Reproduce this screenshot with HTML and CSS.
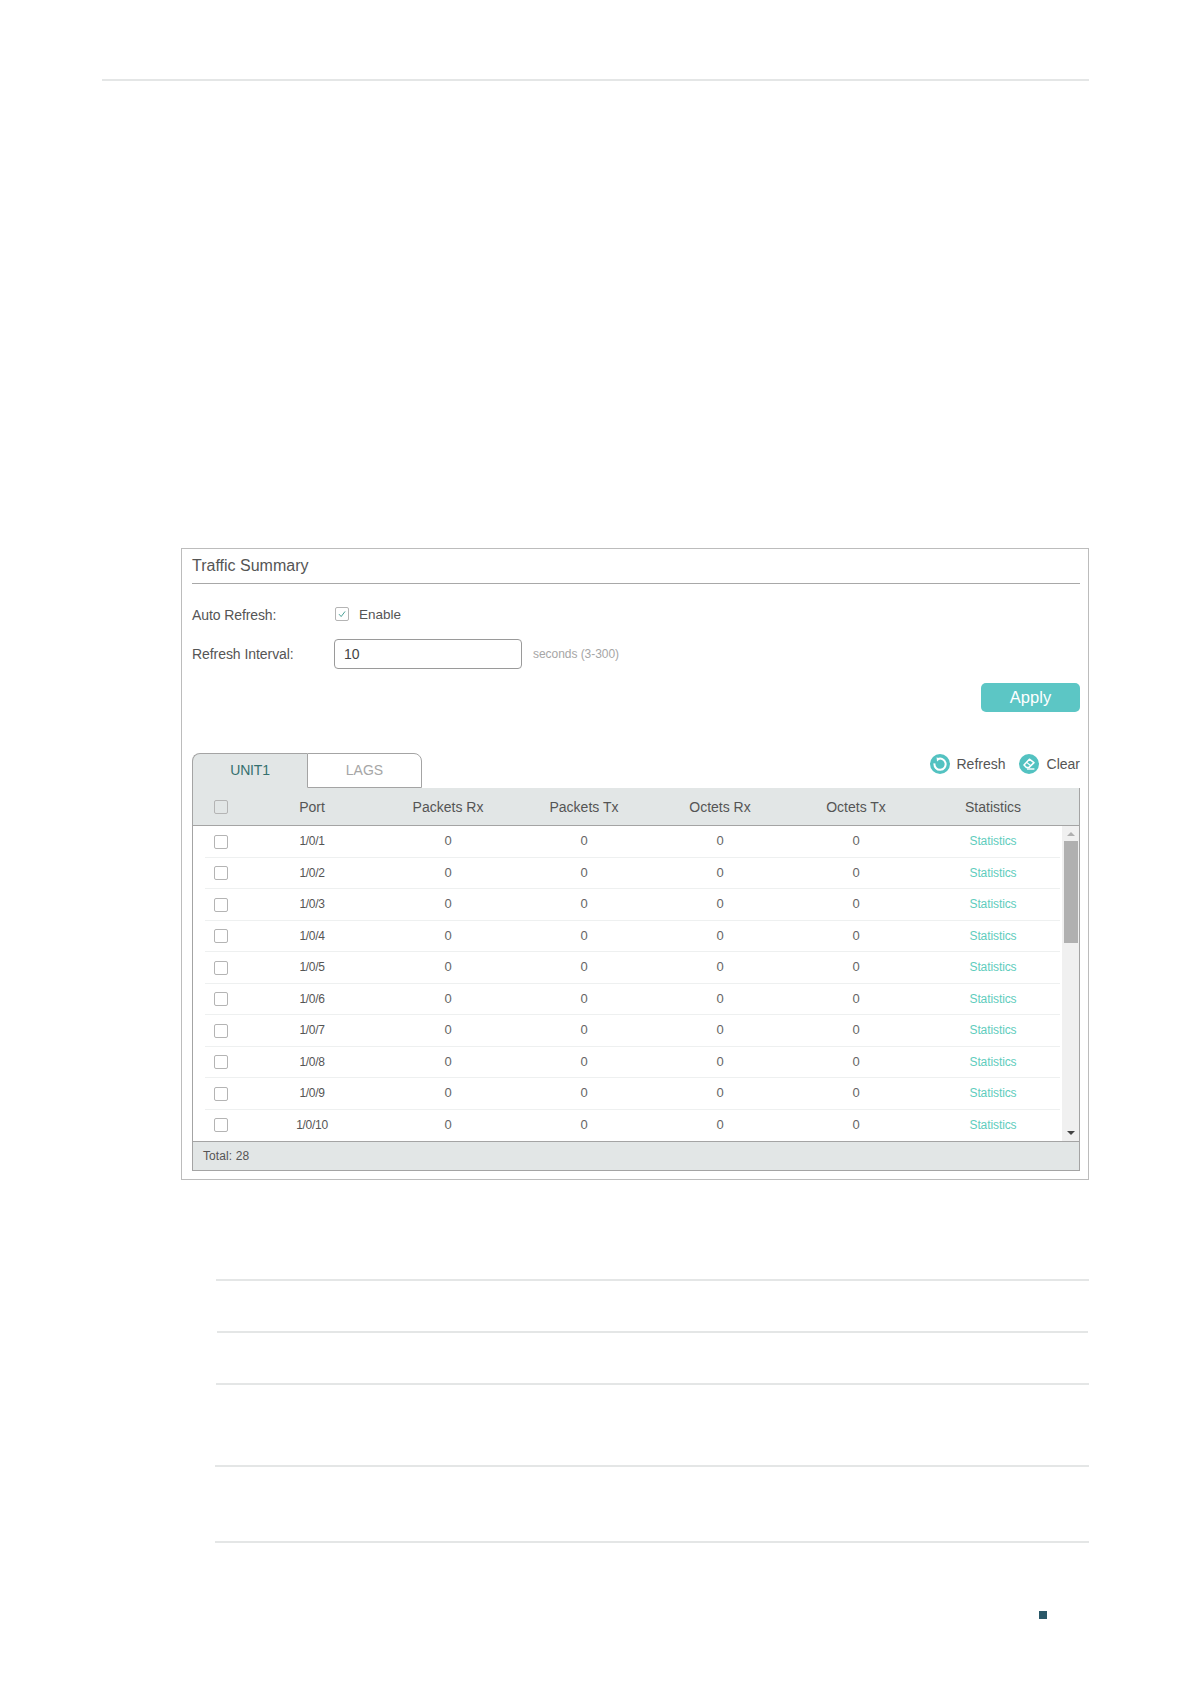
FILE: index.html
```html
<!DOCTYPE html>
<html lang="en">
<head>
<meta charset="utf-8">
<title>Traffic Summary</title>
<link rel="stylesheet" href="styles.css">
</head>
<body>
<div class="page">
  <div class="top-rule"></div>
  <section class="panel">
    <h2 class="title">Traffic Summary</h2>
    <div class="form-row auto-row">
      <span class="label label-auto">Auto Refresh:</span>
      <span class="check-wrap">
        <span class="box box-checked"><svg viewBox="0 0 14 14" class="tick"><path d="M3.5 7.2 6 10l4.6-6"/></svg></span>
        <span class="enable">Enable</span>
      </span>
    </div>
    <div class="form-row interval-row">
      <span class="label label-interval">Refresh Interval:</span>
      <span class="input">10</span>
      <span class="hint">seconds (3-300)</span>
    </div>
    <div class="apply-row"><span class="apply">Apply</span></div>
    <div class="tabbar">
      <div class="tabs">
        <span class="tab tab-on">UNIT1</span>
        <span class="tab tab-off">LAGS</span>
      </div>
      <div class="tools">
        <span class="tool tool-refresh">
          <svg class="tool-icon" viewBox="0 0 20 20"><circle cx="10" cy="10" r="10" fill="#53c2c1"/><path d="M7.6 5.2A5.6 5.6 0 1 1 4.5 9.4" fill="none" stroke="#fff" stroke-width="2"/><path d="M6.6 3.2 10 5 7 7.6Z" fill="#fff"/></svg>
          Refresh
        </span>
        <span class="tool">
          <svg class="tool-icon" viewBox="0 0 20 20"><circle cx="10" cy="10" r="10" fill="#53c2c1"/><path d="M5 11 10.4 5.2 15 8.6 9.8 13.6H7.4Z" fill="none" stroke="#fff" stroke-width="1.5" stroke-linejoin="round"/><path d="M7.6 8.4 11.8 11.8" stroke="#fff" stroke-width="1.2"/><path d="M8 15h7.4" stroke="#fff" stroke-width="1.4"/></svg>
          Clear
        </span>
      </div>
    </div>
    <div class="table">
      <div class="grid head">
        <span class="cell cell-box"><span class="box box-head"></span></span>
        <span class="cell">Port</span>
        <span class="cell">Packets Rx</span>
        <span class="cell">Packets Tx</span>
        <span class="cell">Octets Rx</span>
        <span class="cell">Octets Tx</span>
        <span class="cell cell-stat">Statistics</span>
      </div>
      <div class="body">
        <div class="rows">
          <div class="grid row"><span class="cell cell-box"><span class="box"></span></span><span class="cell port">1/0/1</span><span class="cell num">0</span><span class="cell num">0</span><span class="cell num">0</span><span class="cell num">0</span><span class="cell cell-stat link">Statistics</span></div>
          <div class="grid row"><span class="cell cell-box"><span class="box"></span></span><span class="cell port">1/0/2</span><span class="cell num">0</span><span class="cell num">0</span><span class="cell num">0</span><span class="cell num">0</span><span class="cell cell-stat link">Statistics</span></div>
          <div class="grid row"><span class="cell cell-box"><span class="box"></span></span><span class="cell port">1/0/3</span><span class="cell num">0</span><span class="cell num">0</span><span class="cell num">0</span><span class="cell num">0</span><span class="cell cell-stat link">Statistics</span></div>
          <div class="grid row"><span class="cell cell-box"><span class="box"></span></span><span class="cell port">1/0/4</span><span class="cell num">0</span><span class="cell num">0</span><span class="cell num">0</span><span class="cell num">0</span><span class="cell cell-stat link">Statistics</span></div>
          <div class="grid row"><span class="cell cell-box"><span class="box"></span></span><span class="cell port">1/0/5</span><span class="cell num">0</span><span class="cell num">0</span><span class="cell num">0</span><span class="cell num">0</span><span class="cell cell-stat link">Statistics</span></div>
          <div class="grid row"><span class="cell cell-box"><span class="box"></span></span><span class="cell port">1/0/6</span><span class="cell num">0</span><span class="cell num">0</span><span class="cell num">0</span><span class="cell num">0</span><span class="cell cell-stat link">Statistics</span></div>
          <div class="grid row"><span class="cell cell-box"><span class="box"></span></span><span class="cell port">1/0/7</span><span class="cell num">0</span><span class="cell num">0</span><span class="cell num">0</span><span class="cell num">0</span><span class="cell cell-stat link">Statistics</span></div>
          <div class="grid row"><span class="cell cell-box"><span class="box"></span></span><span class="cell port">1/0/8</span><span class="cell num">0</span><span class="cell num">0</span><span class="cell num">0</span><span class="cell num">0</span><span class="cell cell-stat link">Statistics</span></div>
          <div class="grid row"><span class="cell cell-box"><span class="box"></span></span><span class="cell port">1/0/9</span><span class="cell num">0</span><span class="cell num">0</span><span class="cell num">0</span><span class="cell num">0</span><span class="cell cell-stat link">Statistics</span></div>
          <div class="grid row"><span class="cell cell-box"><span class="box"></span></span><span class="cell port">1/0/10</span><span class="cell num">0</span><span class="cell num">0</span><span class="cell num">0</span><span class="cell num">0</span><span class="cell cell-stat link">Statistics</span></div>
        </div>
        <div class="scrollbar">
          <span class="arrow arrow-up"></span>
          <span class="thumb"></span>
          <span class="arrow arrow-down"></span>
        </div>
      </div>
      <div class="foot">Total: 28</div>
    </div>
  </section>
  <div class="rules">
    <div class="rule r1"></div>
    <div class="rule r2"></div>
    <div class="rule r3"></div>
    <div class="rule r4"></div>
    <div class="rule r5"></div>
  </div>
  <div class="footer-mark"><span class="square"></span></div>
</div>
</body>
</html>
```

FILE: styles.css
```css
* { box-sizing: border-box; }
html, body { margin: 0; padding: 0; background: #fff; }
body { font-family: "Liberation Sans", Arial, sans-serif; color: #555; }
.page { width: 1191px; height: 1684px; padding: 79px 102px 0 102px; }
.top-rule { height: 2px; background: #e4e6e6; }

.panel { margin: 467px 0 0 79px; height: 632px; border: 1px solid #bcbcbc; padding: 0 8px 6px 10px; }
.title { margin: 0; height: 35px; border-bottom: 1px solid #a8a8a8; font-size: 16px; font-weight: 400; line-height: 33px; color: #555; }

.form-row { display: flex; align-items: center; font-size: 14px; }
.auto-row { height: 30px; margin-top: 15px; }
.interval-row { height: 30px; margin-top: 10px; }
.label { width: 142px; color: #555; }
.label-auto { letter-spacing: -.1px; padding-top: 1px; }
.label-interval { letter-spacing: -.06px; }
.check-wrap { display: flex; align-items: center; gap: 10px; margin-left: 1px; }
.enable { font-size: 13.5px; }
.box { display: block; width: 14px; height: 14px; border: 1px solid #b4b4b4; border-radius: 2px; background: #fff; }
.box-head { background: #e2e6e6; }
.tick { display: block; width: 12px; height: 12px; fill: none; stroke: #3f9a8f; stroke-width: 1.1; }
.input { width: 188px; height: 30px; border: 1px solid #9a9a9a; border-radius: 4px; padding-left: 9px; line-height: 28px; font-size: 14px; color: #444; }
.hint { margin-left: 11px; font-size: 12px; letter-spacing: -.05px; color: #a6a6a6; }

.apply-row { display: flex; justify-content: flex-end; margin-top: 14px; }
.apply { width: 99px; height: 29px; border-radius: 5px; background: #5cc6c5; color: #fff; font-size: 16.5px; line-height: 29px; text-align: center; }

.tabbar { display: flex; justify-content: space-between; margin-top: 41px; height: 35px; }
.tabs { display: flex; }
.tab { height: 35px; font-size: 14px; line-height: 33px; text-align: center; border: 1px solid #a4a4a4; border-bottom: 0; }
.tab-on { width: 115px; background: #e2e6e6; color: #35706f; letter-spacing: -.2px; border-radius: 8px 0 0 0; border-right: 0; }
.tab-off { width: 115px; background: #fff; color: #a6a6a6; border-radius: 0 8px 0 0; border-bottom: 1px solid #a4a4a4; }
.tools { display: flex; gap: 13px; height: 22px; font-size: 14px; }
.tool { display: flex; align-items: center; gap: 8px; }
.tool-refresh { gap: 7px; }
.tool-icon { display: block; width: 20px; height: 20px; }

.table { height: 383px; border: 1px solid #a4a4a4; border-top: 0; display: flex; flex-direction: column; }
.grid { display: grid; grid-template-columns: 51px repeat(6, 136px); }
.head { height: 38px; background: #e2e6e6; border-bottom: 1px solid #a4a4a4; font-size: 14px; color: #555; }
.cell { display: flex; align-items: center; justify-content: center; }
.cell-box { padding-left: 4px; }
.cell-stat { padding-left: 2px; }
.body { display: flex; height: 315px; }
.rows { width: 869px; display: grid; grid-template-rows: repeat(10, 1fr); }
.row { font-size: 12px; color: #555; background-image: linear-gradient(#eef0f0, #eef0f0); background-repeat: no-repeat; background-size: 855px 1px; background-position: 12px 100%; }
.row:last-child { background-image: none; }
.port { letter-spacing: -.3px; padding-bottom: 1px; }
.num { font-size: 13px; color: #666; padding-bottom: 2px; }
.link { color: #5fcdbd; letter-spacing: -.1px; padding-bottom: 1px; }
.scrollbar { width: 17px; background: #f0f0f0; position: relative; display: flex; flex-direction: column; align-items: center; }
.thumb { width: 14px; height: 102px; background: #b0b0b0; margin-top: 15px; }
.arrow { position: absolute; left: 4.5px; width: 0; height: 0; border-left: 4px solid transparent; border-right: 4px solid transparent; }
.arrow-up { top: 6px; border-bottom: 4px solid #b0b0b0; }
.arrow-down { bottom: 6px; border-top: 4px solid #444; }
.foot { flex: 1; background: #e2e6e6; border-top: 1px solid #a4a4a4; padding-left: 10px; font-size: 12px; letter-spacing: .1px; line-height: 28px; color: #555; }

.rules { margin-top: 99px; display: flex; flex-direction: column; }
.rule { height: 2px; background: #e4e6e6; }
.r1 { margin-left: 114px; }
.r2 { margin: 50px 1px 0 115px; }
.r3 { margin: 50px 0 0 114px; }
.r4 { margin: 80px 0 0 113px; }
.r5 { margin: 74px 0 0 113px; }
.footer-mark { margin-top: 68px; display: flex; justify-content: flex-end; padding-right: 42px; }
.square { display: block; width: 8px; height: 8px; background: #2a5868; }
```
